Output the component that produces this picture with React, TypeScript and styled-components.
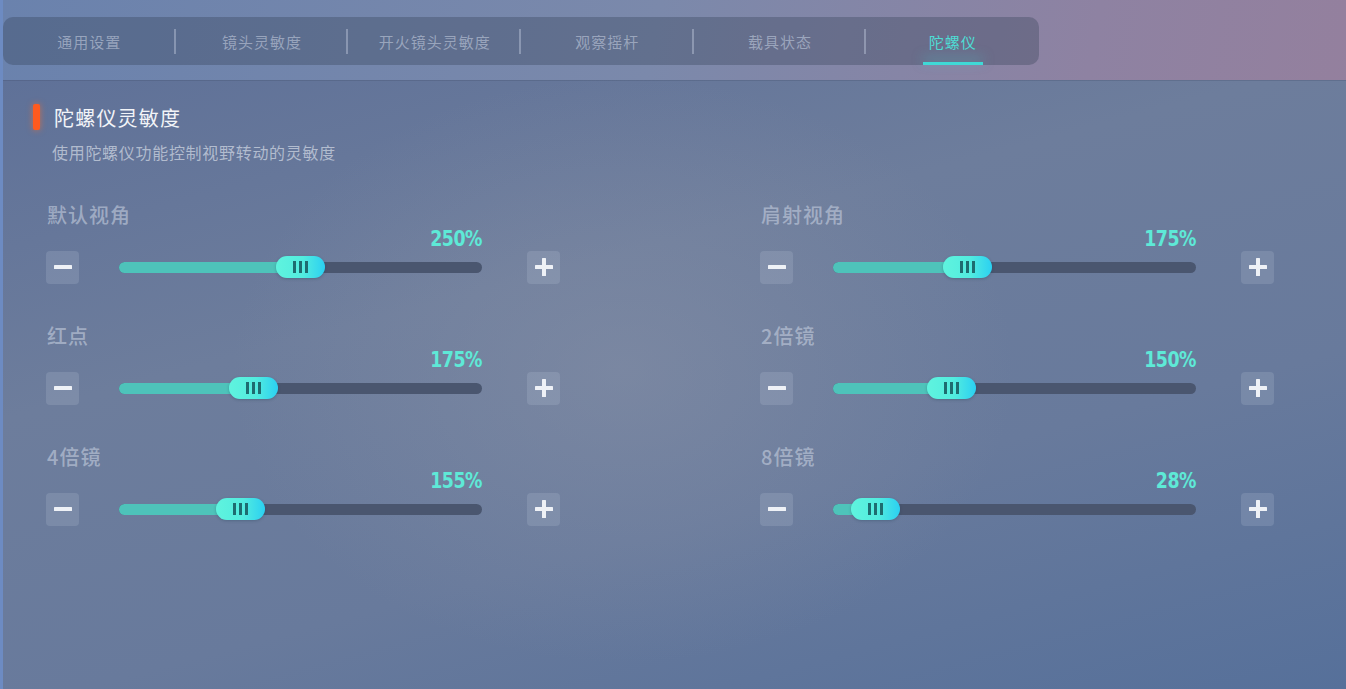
import React from 'react';
import styled, { createGlobalStyle } from 'styled-components';

const GlobalStyle = createGlobalStyle`
	html, body {
		margin: 0;
		padding: 0;
		width: 100%;
		height: 100%;
		overflow: hidden;
	}
	body {
		font-family: "Noto Sans CJK SC", "Noto Sans", sans-serif;
	}
	#root {
		height: 100%;
	}
`;

const Screen = styled.div`
	display: flex;
	flex-flow: column nowrap;
	width: 1346px;
	height: 689px;
	background: linear-gradient(100deg, #6a82ad 0%, #7b89ab 45%, #8e82a2 75%, #967f9c 100%);
	padding-left: 3px;
	box-sizing: border-box;
	box-shadow: inset 3px 0 0 #6d8bc2;
`;

const Header = styled.div`
	display: flex;
	flex-flow: row nowrap;
	align-items: flex-start;
	height: 80px;
	padding-top: 17px;
	box-sizing: border-box;
`;

const TabBar = styled.div`
	display: grid;
	grid-template-columns: repeat(6, 1fr);
	width: 1036px;
	height: 48px;
	border-radius: 10px;
	background: rgba(48, 58, 82, 0.32);
`;

const Tab = styled.div<{ $active?: boolean; $divider?: boolean }>`
	position: relative;
	display: flex;
	align-items: center;
	justify-content: center;
	font-size: 15px;
	letter-spacing: 1px;
	color: ${p => (p.$active ? '#4fdcd4' : 'rgba(180, 190, 210, 0.7)')};

	&::after {
		content: '';
		display: ${p => (p.$divider ? 'block' : 'none')};
		position: absolute;
		right: 0;
		top: 12px;
		width: 2px;
		height: 25px;
		background: rgba(190, 200, 220, 0.45);
	}

	&::before {
		content: '';
		display: ${p => (p.$active ? 'block' : 'none')};
		position: absolute;
		left: 50%;
		bottom: 0;
		transform: translateX(-50%);
		width: 60px;
		height: 3px;
		background: #3fd9d6;
		box-shadow: 0 -4px 12px rgba(63, 217, 214, 0.55);
	}
`;

const Panel = styled.div`
	flex: 1;
	display: flex;
	flex-flow: column nowrap;
	padding: 24px 0 0 30px;
	background:
		radial-gradient(ellipse 560px 420px at 620px 290px, rgba(145, 152, 170, 0.4), rgba(145, 152, 170, 0) 70%),
		linear-gradient(165deg, #5f7198 0%, #6d7d9c 35%, #687a9c 65%, #56709a 100%);
	box-shadow: inset 0 1px 0 rgba(60, 70, 100, 0.25);
`;

const SectionTitle = styled.div`
	display: flex;
	flex-flow: row nowrap;
	align-items: center;
	gap: 14px;
	height: 26px;
	font-size: 20px;
	color: #f2f4f8;
	letter-spacing: 1.2px;
`;

const Accent = styled.span`
	display: block;
	width: 7px;
	height: 26px;
	border-radius: 2px;
	background: #ff5a1e;
	box-shadow: 0 0 6px rgba(255, 110, 40, 0.6);
`;

const SectionDesc = styled.div`
	margin: 12px 0 0 19px;
	font-size: 16px;
	line-height: 20px;
	letter-spacing: 0.7px;
	color: rgba(200, 208, 222, 0.78);
`;

const Grid = styled.div`
	display: grid;
	grid-template-columns: 514px 514px;
	column-gap: 200px;
	row-gap: 40px;
	margin: 41px 0 0 13px;
`;

const Setting = styled.div`
	display: flex;
	flex-flow: column nowrap;
`;

const Label = styled.div`
	height: 24px;
	line-height: 24px;
	font-size: 20px;
	letter-spacing: 1px;
	font-weight: 500;
	color: rgba(196, 205, 222, 0.62);
	padding-left: 1px;
`;

const Value = styled.div`
	height: 24px;
	line-height: 24px;
	margin-right: 78px;
	text-align: right;
	font-family: "DejaVu Sans Condensed", "Liberation Sans Narrow", sans-serif;
	font-weight: bold;
	font-size: 21px;
	color: #5ee9d7;
	letter-spacing: -0.5px;
	transform: scaleX(0.92);
	transform-origin: right center;
`;

const Controls = styled.div`
	display: flex;
	flex-flow: row nowrap;
	align-items: center;
	height: 34px;
	margin-top: -1px;
`;

const StepButton = styled.div`
	display: flex;
	align-items: center;
	justify-content: center;
	width: 33px;
	height: 33px;
	border-radius: 4px;
	background: rgba(200, 210, 228, 0.18);
`;

const Track = styled.div`
	position: relative;
	flex: 0 0 363px;
	height: 11px;
	margin: 0 45px 0 40px;
	border-radius: 6px;
	background: #4a566f;
`;

const Fill = styled.div`
	position: absolute;
	left: 0;
	top: 0;
	bottom: 0;
	border-radius: 6px;
	background: #4ec3ba;
`;

const Thumb = styled.div`
	position: absolute;
	top: 50%;
	display: flex;
	align-items: center;
	justify-content: center;
	gap: 3px;
	width: 49px;
	height: 22px;
	margin-top: -11px;
	border-radius: 11px;
	background: linear-gradient(90deg, #5ff3de 0%, #52ecdf 55%, #2bd0f2 100%);
	box-shadow: 0 1px 3px rgba(30, 60, 80, 0.3);
`;

const Grip = styled.span`
	display: block;
	width: 3px;
	height: 12px;
	background: #1e6c70;
`;

const TRACK_W = 363;
const THUMB_W = 49;

const MinusIcon = () => (
	<svg width="20" height="20" viewBox="0 0 20 20">
		<rect x="1" y="8" width="18" height="4" rx="0.5" fill="#eef1f6" />
	</svg>
);

const PlusIcon = () => (
	<svg width="20" height="20" viewBox="0 0 20 20">
		<rect x="1" y="8" width="18" height="4" rx="0.5" fill="#eef1f6" />
		<rect x="8" y="1" width="4" height="18" rx="0.5" fill="#eef1f6" />
	</svg>
);

interface SliderSettingProps {
	label: string;
	value: number;
}

const SliderSetting: React.FC<SliderSettingProps> = ({ label, value }) => {
	const left = (value / 500) * (TRACK_W - THUMB_W);

	return (
		<Setting>
			<Label>{label}</Label>
			<Value>{value}%</Value>
			<Controls>
				<StepButton>
					<MinusIcon />
				</StepButton>
				<Track>
					<Fill style={{ width: left + THUMB_W / 2 }} />
					<Thumb style={{ left }}>
						<Grip />
						<Grip />
						<Grip />
					</Thumb>
				</Track>
				<StepButton>
					<PlusIcon />
				</StepButton>
			</Controls>
		</Setting>
	);
};

const tabs = ['通用设置', '镜头灵敏度', '开火镜头灵敏度', '观察摇杆', '载具状态', '陀螺仪'];

const settings = [
	{ label: '默认视角', value: 250 },
	{ label: '肩射视角', value: 175 },
	{ label: '红点', value: 175 },
	{ label: '2倍镜', value: 150 },
	{ label: '4倍镜', value: 155 },
	{ label: '8倍镜', value: 28 },
];

export default function App() {
	return (
		<>
			<GlobalStyle />
			<Screen>
				<Header>
					<TabBar>
						{tabs.map((t, i) => (
							<Tab key={t} $active={i === tabs.length - 1} $divider={i < tabs.length - 1}>
								{t}
							</Tab>
						))}
					</TabBar>
				</Header>
				<Panel>
					<SectionTitle>
						<Accent />
						陀螺仪灵敏度
					</SectionTitle>
					<SectionDesc>使用陀螺仪功能控制视野转动的灵敏度</SectionDesc>
					<Grid>
						{settings.map(s => (
							<SliderSetting key={s.label} label={s.label} value={s.value} />
						))}
					</Grid>
				</Panel>
			</Screen>
		</>
	);
}
